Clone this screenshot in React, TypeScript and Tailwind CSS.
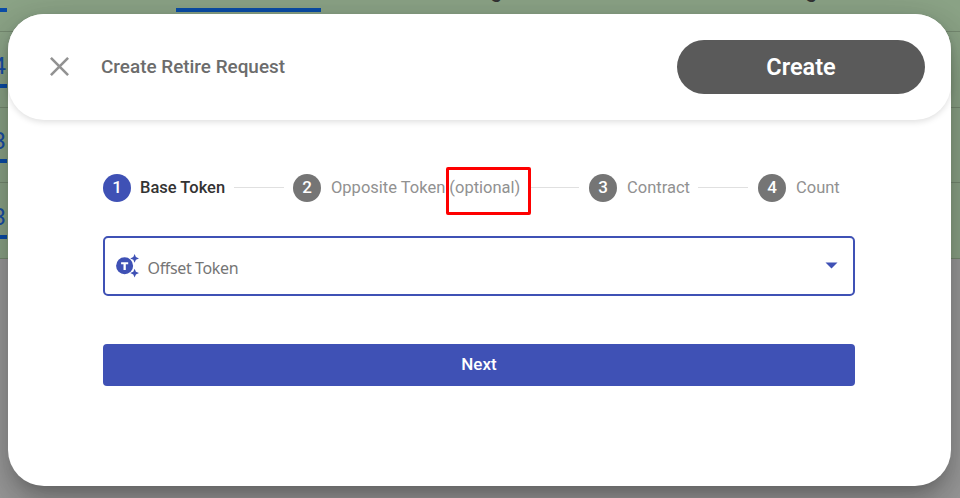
import React from "react";

const rows = [
  { value: "", height: "h-[32px]" },
  { value: "4", height: "h-[76px]" },
  { value: "3", height: "h-[75px]" },
  { value: "3", height: "h-[76px]" },
];

function BackgroundTable() {
  return (
    <div className="flex flex-col">
      {rows.map((row, i) => (
        <div
          key={i}
          className={`relative flex items-end overflow-hidden border-b border-[#768a71] bg-[#8ca487] ${row.height}`}
        >
          {row.value && (
            <span className="absolute right-[954px] bottom-[27px] text-[24px] leading-[28px] text-[#1a4fa8]">
              {row.value}
            </span>
          )}
          <div className="mb-[19px] flex gap-[169px]">
            <div className="h-1 w-[7px] bg-[#0b4da8]" />
            {i === 0 && <div className="h-1 w-[145px] bg-[#0b4da8]" />}
          </div>
          {i === 0 && (
            <>
              <span className="absolute top-[-23px] left-[490px] text-[23px] leading-[26px] text-[#333]">g</span>
              <span className="absolute top-[-23px] left-[805px] text-[23px] leading-[26px] text-[#333]">g</span>
            </>
          )}
        </div>
      ))}
    </div>
  );
}

function StepNumber({ n, active }: { n: number; active?: boolean }) {
  return (
    <span
      className={`flex size-7 shrink-0 items-center justify-center rounded-full text-[17px] font-medium leading-none text-white ${
        active ? "bg-[#3f51b5]" : "bg-[#757575]"
      }`}
    >
      {n}
    </span>
  );
}

function Stepper() {
  return (
    <div className="flex h-7 items-center text-[16.5px] leading-6 whitespace-nowrap text-[#919191]">
      <div className="flex w-[131px] items-center gap-[9px]">
        <StepNumber n={1} active />
        <span className="font-medium text-[#333]">Base Token</span>
      </div>
      <div className="h-px w-[50px] bg-[#e0e0e0]" />
      <div className="ml-[9px] flex w-[238px] items-center gap-[10px]">
        <StepNumber n={2} />
        <span className="relative">
          Opposite Token (optional)
          <span className="absolute top-[-9px] left-[115px] h-[48px] w-[85px] rounded-[2px] border-[3px] border-[#fe0000]" />
        </span>
      </div>
      <div className="h-px w-[48px] bg-[#e0e0e0]" />
      <div className="ml-[10px] flex w-[109px] items-center gap-[10px]">
        <StepNumber n={3} />
        <span>Contract</span>
      </div>
      <div className="h-px w-[50px] bg-[#e0e0e0]" />
      <div className="ml-[10px] flex items-center gap-[10px]">
        <StepNumber n={4} />
        <span>Count</span>
      </div>
    </div>
  );
}

function TokenIcon() {
  return (
    <svg className="mt-px" width="24" height="24" viewBox="0 0 24 24" fill="#3f51b5">
      <circle cx="8.6" cy="11.8" r="8.5" />
      <path d="M5.1 8.2h7.1v2.1H9.8v5.8H7.5v-5.8H5.1z" fill="#fff" />
      <path d="M18.6 0l1.3 3.1L23 4.4l-3.1 1.3-1.3 3.1-1.3-3.1-3.1-1.3 3.1-1.3zM18.6 14.7l1.3 3.1 3.1 1.3-3.1 1.3-1.3 3.1-1.3-3.1-3.1-1.3 3.1-1.3z" />
    </svg>
  );
}

export default function App() {
  return (
    <div className="relative h-[498px] w-[960px] overflow-hidden bg-[#9b9b9b] font-['Roboto','Liberation_Sans',sans-serif]">
      <BackgroundTable />
      <section className="absolute top-[13.5px] left-[7.5px] h-[472px] w-[943.5px] rounded-[36px] bg-white shadow-[0_11px_15px_-7px_rgba(0,0,0,0.2),0_24px_38px_3px_rgba(0,0,0,0.14),0_9px_46px_8px_rgba(0,0,0,0.12)]">
        <header className="flex h-[106px] items-center rounded-[36px] bg-white pr-[26px] pl-[42.5px] shadow-[0_2px_6px_rgba(0,0,0,0.13)]">
          <svg width="19" height="19" viewBox="0 0 19 19" stroke="#929292" strokeWidth="2.6">
            <path d="M.9.9l17.2 17.2M18.1.9L.9 18.1" />
          </svg>
          <h1 className="ml-[32px] pt-[2px] text-[18.9px] font-medium text-[#6c6c6c]">Create Retire Request</h1>
          <button className="ml-auto h-[54px] w-[248px] rounded-full bg-[#5a5a5a] pt-[3px] text-[23.5px] font-semibold text-white">
            Create
          </button>
        </header>
        <main className="pt-[54px] pr-[95px] pl-[95.5px]">
          <Stepper />
          <div className="mt-[34px] flex h-[60px] w-[752px] items-center rounded-[5px] border-2 border-[#3f51b5] pr-[15px] pl-[11px]">
            <TokenIcon />
            <span className="mt-[4px] ml-[7.5px] font-['Noto_Sans',sans-serif] text-[16px] tracking-[-0.36px] text-[#757575]">
              Offset Token
            </span>
            <svg className="ml-auto" width="13" height="7" viewBox="0 0 13 7" fill="#3f51b5">
              <path d="M.5.5h12l-6 6z" />
            </svg>
          </div>
          <button className="mt-[48px] h-[42.5px] w-[752px] rounded-[4px] bg-[#3f51b5] text-[17px] font-medium text-white">
            Next
          </button>
        </main>
      </section>
    </div>
  );
}
